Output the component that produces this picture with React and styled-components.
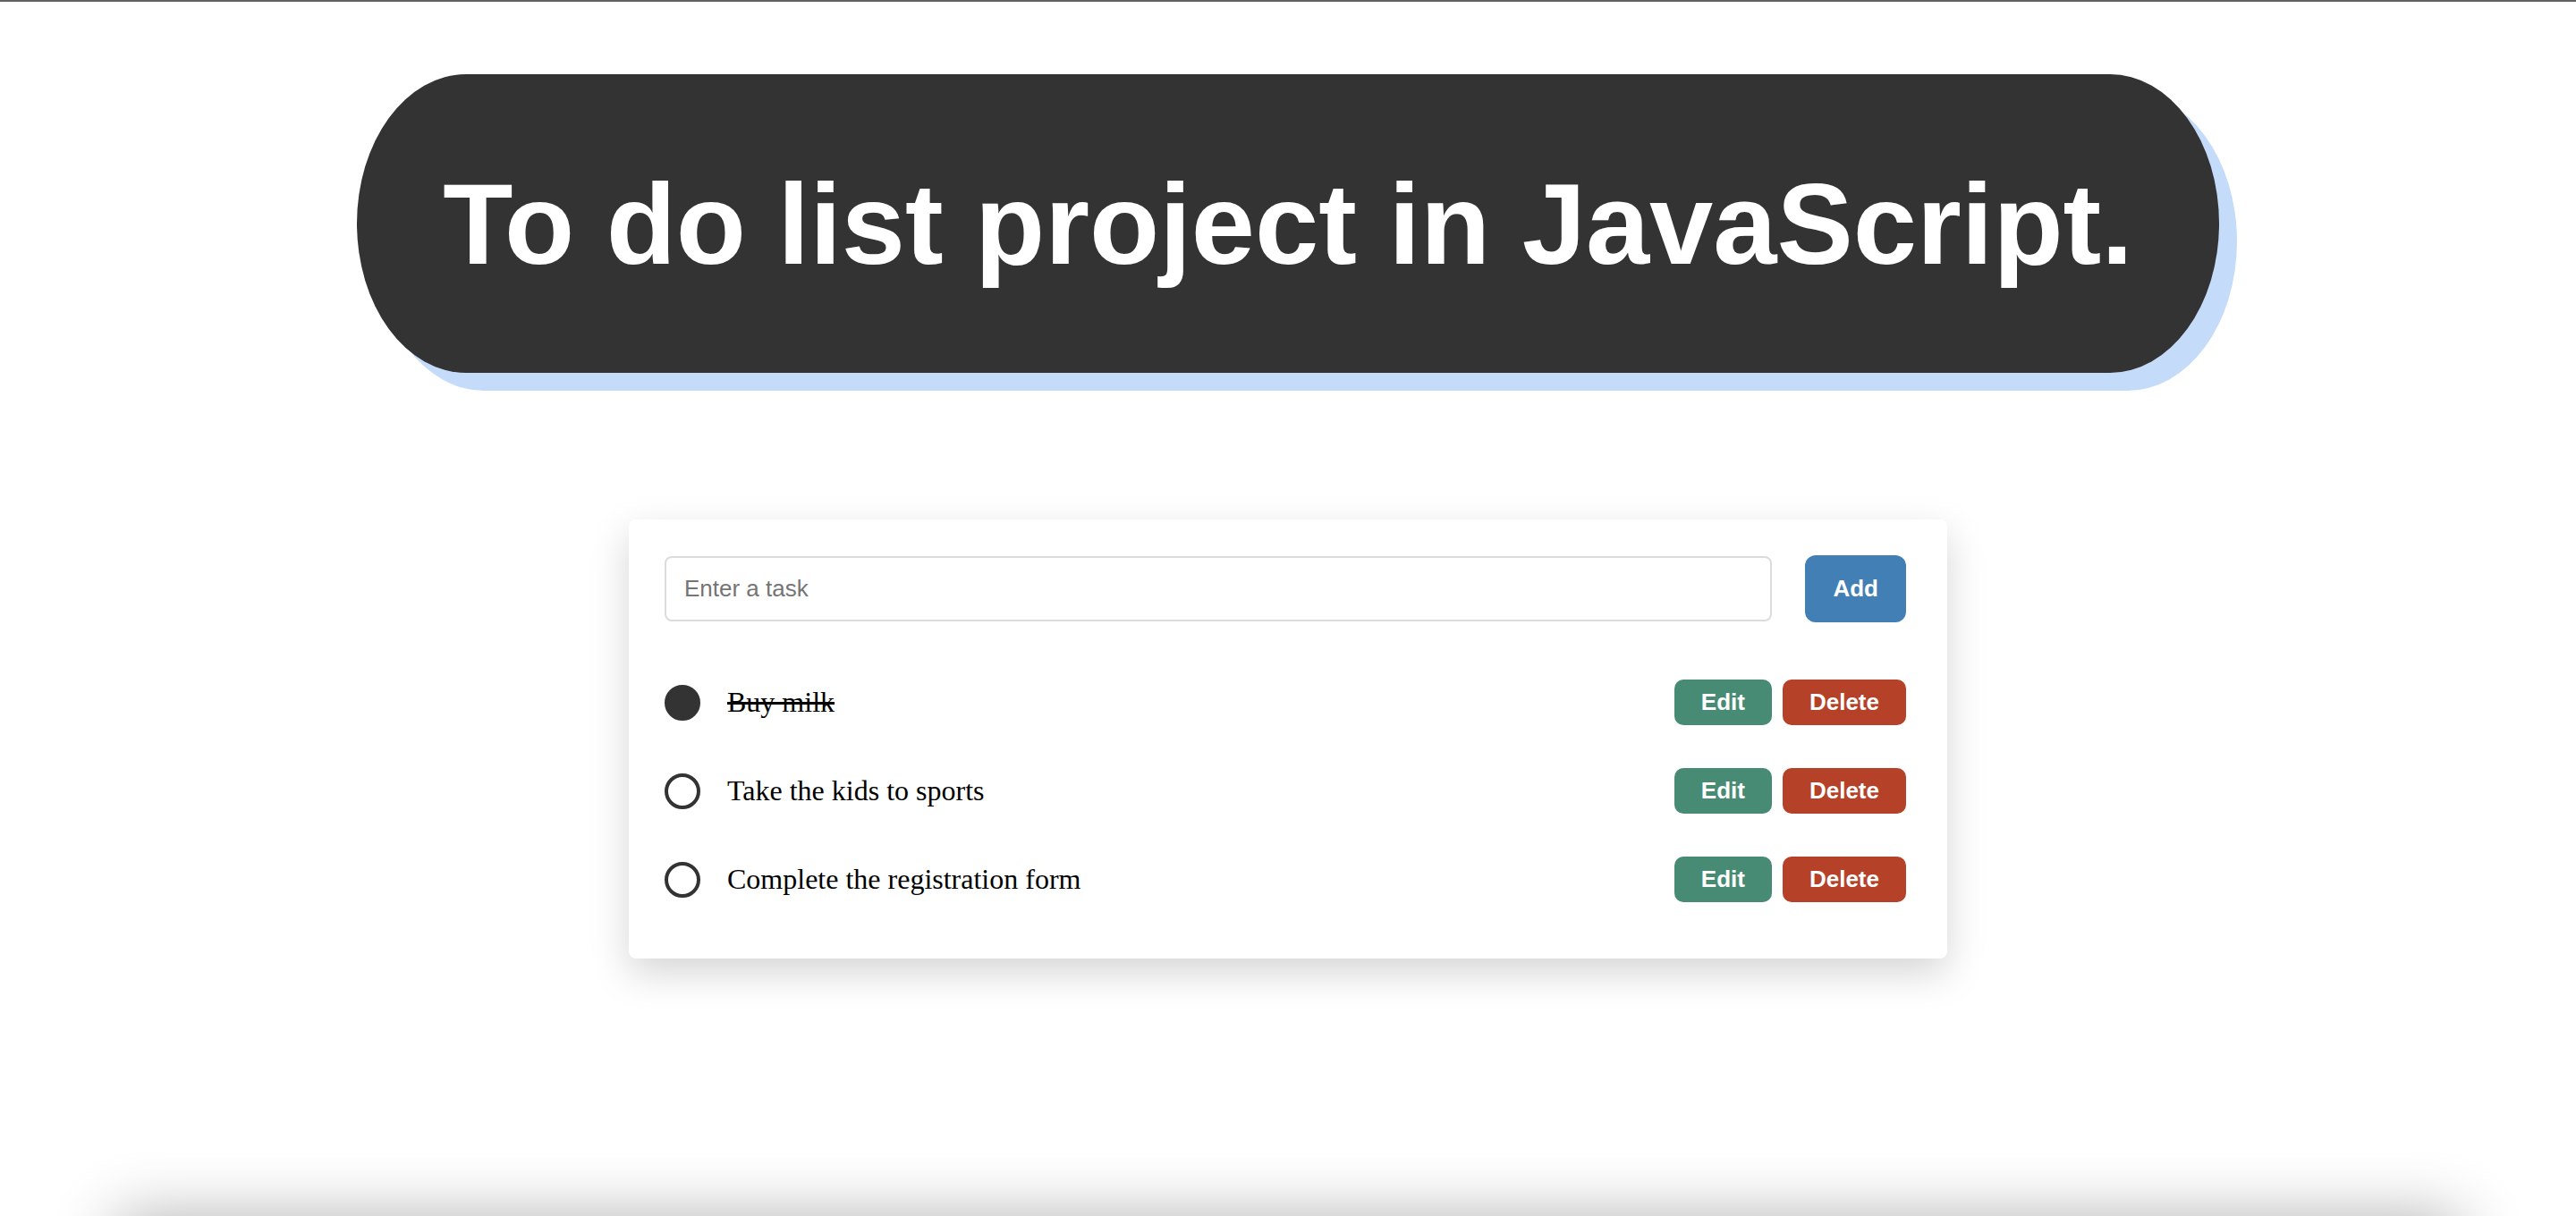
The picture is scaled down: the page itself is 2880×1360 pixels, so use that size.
import React, { useState } from 'react';
import styled, { createGlobalStyle } from 'styled-components';

const GlobalStyle = createGlobalStyle`
  * { box-sizing: border-box; }
  html, body {
    margin: 0;
    padding: 0;
    background: #fff;
  }
  body {
    font-family: "Liberation Serif", "Times New Roman", serif;
  }
`;

const Page = styled.div`
  height: 100vh;
  border-top: 2px solid #616161;
  overflow: hidden;
  display: flex;
  flex-direction: column;
  align-items: center;
`;

const Title = styled.h1`
  margin: 81px 0 0;
  padding: 0 96px;
  height: 334px;
  display: flex;
  align-items: center;
  border-radius: 122px / 167px;
  background: #333;
  color: #fff;
  font-family: "Liberation Sans", Helvetica, Arial, sans-serif;
  font-weight: 700;
  font-size: 128px;
  box-shadow: 20px 20px 0 #c5dbfa;
  white-space: nowrap;
`;

const Card = styled.div`
  margin-top: 164px;
  width: 1474px;
  padding: 40px 46px 63px 40px;
  background: #fff;
  border-radius: 8px;
  box-shadow: 0 16px 44px rgba(0, 0, 0, 0.17);
`;

const Form = styled.form`
  display: flex;
  align-items: center;
  gap: 37px;
`;

const TaskInput = styled.input`
  flex: 1;
  height: 73px;
  padding: 0 20px;
  border: 2px solid #dcdcdc;
  border-radius: 8px;
  font-family: "Liberation Sans", Arial, sans-serif;
  font-size: 26px;
  color: #222;
  outline: none;

  &::placeholder {
    color: #757575;
  }
`;

const Button = styled.button`
  border: none;
  border-radius: ${p => (p.$big ? '12px' : '10px')};
  height: ${p => (p.$big ? '75px' : '51px')};
  padding: 0 ${p => (p.$big ? '31px' : '30px')};
  background: ${p => p.$color};
  color: #fff;
  font-family: "Liberation Sans", Helvetica, Arial, sans-serif;
  font-weight: 700;
  font-size: 26px;
  cursor: pointer;
`;

const List = styled.ul`
  list-style: none;
  margin: 64px 0 0;
  padding: 0;
  display: flex;
  flex-direction: column;
  gap: 48px;
`;

const Row = styled.li`
  display: flex;
  align-items: center;
  height: 51px;
`;

const Check = styled.span`
  width: 40px;
  height: 40px;
  border-radius: 50%;
  border: 4px solid #333;
  background: ${p => (p.$done ? '#333' : '#fff')};
  flex-shrink: 0;
  cursor: pointer;
`;

const TaskText = styled.span`
  flex: 1;
  margin-left: 30px;
  font-size: 32px;
  color: #000;
  text-decoration: ${p => (p.$done ? 'line-through' : 'none')};
  text-decoration-thickness: 3px;
`;

const Actions = styled.div`
  display: flex;
  gap: 12px;
`;

const Footer = styled.footer`
  margin-top: auto;
  margin-bottom: -80px;
  width: calc(100% - 260px);
  height: 80px;
  flex-shrink: 0;
  background: #fff;
  box-shadow: 0 0 70px rgba(0, 0, 0, 0.3);
`;

const initialTasks = [
  { id: 1, text: 'Buy milk', done: true },
  { id: 2, text: 'Take the kids to sports', done: false },
  { id: 3, text: 'Complete the registration form', done: false },
];

export default function App() {
  const [tasks, setTasks] = useState(initialTasks);
  const [value, setValue] = useState('');

  const toggle = id => {
    setTasks(tasks.map(t => (t.id === id ? { ...t, done: !t.done } : t)));
  };

  const remove = id => {
    setTasks(tasks.filter(t => t.id !== id));
  };

  const add = e => {
    e.preventDefault();
    if (!value.trim()) return;
    setTasks([...tasks, { id: Date.now(), text: value.trim(), done: false }]);
    setValue('');
  };

  return (
    <Page>
      <GlobalStyle />
      <Title>To do list project in JavaScript.</Title>
      <Card>
        <Form onSubmit={add}>
          <TaskInput
            placeholder="Enter a task"
            value={value}
            onChange={e => setValue(e.target.value)}
          />
          <Button $big $color="#417fb5" type="submit">Add</Button>
        </Form>
        <List>
          {tasks.map(task => (
            <Row key={task.id}>
              <Check $done={task.done} onClick={() => toggle(task.id)} />
              <TaskText $done={task.done}>{task.text}</TaskText>
              <Actions>
                <Button $color="#478b75" type="button">Edit</Button>
                <Button $color="#b54128" type="button" onClick={() => remove(task.id)}>Delete</Button>
              </Actions>
            </Row>
          ))}
        </List>
      </Card>
      <Footer />
    </Page>
  );
}
